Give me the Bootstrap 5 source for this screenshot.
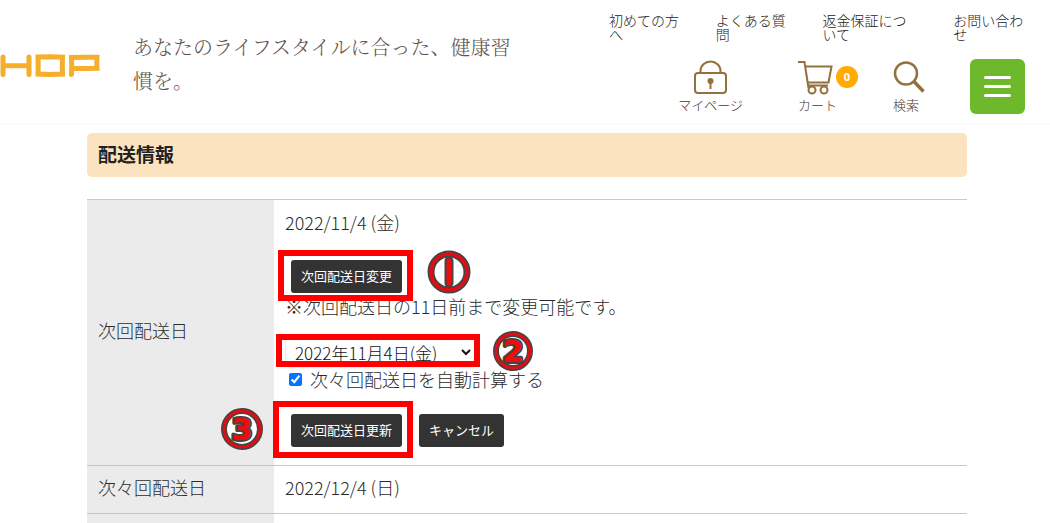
<!DOCTYPE html>
<html lang="ja">
<head>
<meta charset="utf-8">
<meta name="viewport" content="width=device-width, initial-scale=1">
<title>配送情報</title>
<link href="https://cdn.jsdelivr.net/npm/bootstrap@5.3.0/dist/css/bootstrap.min.css" rel="stylesheet">
<style>
  body { font-family: "Noto Sans CJK JP", sans-serif; font-weight: 300; color: #2b2b2b; overflow-x: hidden; }
  .site-header { height: 125px; border-bottom: 2px solid #fbfbfb; padding-right: 25px; }
  .logo { margin-top: 53px; width: 101px; }
  .tagline { font-family: "Noto Serif CJK JP", "Noto Sans CJK JP", serif; font-size: 20px; line-height: 34px; color: #62524a; margin: 30px 0 0 32px; padding-right: 80px; }
  .header-side { width: 416px; }
  .top-links { display: grid; grid-template-columns: 72fr 72fr 96fr 72fr; column-gap: 35px; padding-top: 13px; }
  .top-links a { font-size: 14px; line-height: 14px; color: #222; text-decoration: none; }
  .tools { padding-top: 18px; }
  .tool { font-size: 13px; line-height: 20px; color: #4a382d; text-decoration: none; }
  .tool svg { display: block; height: 36px; }
  .tool-cart { margin: 0 35px 0 55px; width: 60px; }
  .cart-count { top: 7px; right: 0; width: 22px; height: 22px; background: #ffab00; color: #fff; font: 700 11px/22px "Open Sans", sans-serif; }
  .menu-btn { width: 55px; height: 55px; margin-left: 45px; row-gap: 6px; background: #6eb92b; border-radius: 6px; }
  .menu-btn span { width: 27px; height: 3px; border-radius: 2px; background: #fff; }
  main { padding: 8px 83px 0 87px; }
  .section-title { font-size: 19px; line-height: 24px; font-weight: 700; color: #222; background: #fce3bf; border-radius: 5px; padding: 9px 11px 11px; margin-bottom: 22px; }
  .info-table { width: 100%; font-size: 18px; line-height: 27px; }
  .info-table tr { border-top: 1px solid #c8c8c8; }
  .info-table th { width: 187px; background: #ebebeb; font-weight: 300; }
  .info-table th, .info-table td { padding: 8px 11px 12px; }
  .info-table .schedule td { padding-bottom: 18px; }
  .current-date { line-height: 28px; }
  .button-row { padding-left: 6px; column-gap: 17px; }
  .dark-btn { font-size: 13px; line-height: 21px; color: #fff; background: #333; border-radius: 3px; padding: 5px 10px 7px; border: 0; font-weight: 400; height: 33px; display: block; }
  .date-select { font-size: 17px; line-height: 22px; width: 190px; height: 32px; padding: 0 8px 0 5px; border: 1px solid #eee; border-radius: 4px; background: #fff; color: #111; font-weight: 300; display: block; }
  .auto-label { line-height: 22px; }
  .auto-check { width: 13px; height: 13px; margin: 0 8px 0 4px; accent-color: #0075ff; }
  .marker { border: 6px solid #f00; pointer-events: none; }
  .marker-a { inset: -10px -11px -8px -13px; }
  .marker-b { inset: -2px -5px 1px -9px; }
  .marker-c { inset: -13px -11px -11px -18px; }
  .step { width: 44px; height: 44px; }
  .step-1 { left: 136px; top: -10px; }
  .step-2 { left: 206px; top: -7px; }
  .step-3 { left: -71px; top: -7px; }
  .step text { font: 700 31px "DejaVu Sans", sans-serif; }
</style>
</head>
<body>
<header class="site-header d-flex align-items-start">
  <a href="#" class="logo flex-shrink-0" aria-label="HOP">
    <svg class="d-block" width="101" height="25" viewBox="0 0 101 25" fill="none" stroke="#f6ae2d" stroke-width="5" stroke-linecap="round" stroke-linejoin="miter">
      <path d="M3 4v17.500M3 12.500l13 .3 13-.3M29 4v17.500"/>
      <path d="M38 4l12-.3 12.500.4-.2 8.500.2 8.500-12.500.4-12-.4.200-8.500z"/>
      <path d="M71.500 21.500l.2-8-.2-9 13-.2h12.500l-.2 5.500.2 5.500-13 .2-12-.3"/>
    </svg>
  </a>
  <p class="tagline flex-grow-1">あなたのライフスタイルに合った、健康習慣を。</p>
  <div class="header-side flex-shrink-0">
    <nav class="top-links">
      <a href="#">初めての方へ</a><a href="#">よくある質問</a><a href="#">返金保証について</a><a href="#">お問い合わせ</a>
    </nav>
    <div class="tools d-flex justify-content-end">
      <a href="#" class="tool text-center">
        <svg class="mx-auto" width="34" viewBox="0 0 34 36" fill="none" stroke="#94703f" stroke-width="2">
          <rect x="1" y="14" width="31" height="20" rx="3"/><path d="M6.500 14v-2a10 9.500 0 0 1 20 0v2M16.500 22v8"/><circle cx="16.500" cy="22" r="2" fill="#94703f"/>
        </svg>マイページ</a>
      <a href="#" class="tool tool-cart position-relative">
        <svg width="36" viewBox="0 0 36 36" fill="none" stroke="#94703f" stroke-width="2">
          <path d="M0 3h6.500L10.500 29M7.500 7.500H33.500L30.500 23.500H10M10.500 26.500H30"/><circle cx="14" cy="31" r="3.500"/><circle cx="26" cy="31" r="3.500"/>
        </svg>カート<span class="cart-count position-absolute rounded-circle text-center">0</span></a>
      <a href="#" class="tool">
        <svg width="32" viewBox="0 0 32 36" fill="none" stroke="#94703f">
          <circle cx="13" cy="14.500" r="11" stroke-width="2.500"/><path d="M20.500 22l10 10.500" stroke-width="3.500"/>
        </svg>検索</a>
      <button type="button" class="menu-btn border-0 p-0 d-flex flex-column align-items-center justify-content-center" aria-label="メニュー"><span></span><span></span><span></span></button>
    </div>
  </div>
</header>
<main>
  <h1 class="section-title">配送情報</h1>
  <table class="info-table">
    <tbody>
      <tr class="schedule">
        <th scope="row">次回配送日</th>
        <td>
          <div class="current-date">2022/11/4 (金)</div>
          <div class="button-row d-flex pt-4">
            <div class="position-relative">
              <button type="button" class="dark-btn">次回配送日変更</button>
              <span class="marker marker-a position-absolute"></span>
              <svg class="step step-1 position-absolute" viewBox="0 0 44 44" role="img" aria-label="1">
                <circle cx="22" cy="22" r="18" fill="#fff" stroke="#454545" stroke-width="7"/><circle cx="22" cy="22" r="18" fill="none" stroke="#e00d12" stroke-width="3.500"/>
                <path d="M22 11v22" stroke="#454545" stroke-width="9" stroke-linecap="round"/><path d="M22 11v22" stroke="#f20b0b" stroke-width="5" stroke-linecap="round"/>
              </svg>
            </div>
          </div>
          <div>※次回配送日の11日前まで変更可能です。</div>
          <div class="d-flex pt-3">
            <div class="position-relative">
              <select class="date-select" aria-label="次回配送日"><option>2022年11月4日(金)</option></select>
              <span class="marker marker-b position-absolute"></span>
              <svg class="step step-2 position-absolute" viewBox="0 0 44 44">
                <circle cx="22" cy="22" r="17" fill="#fff" stroke="#454545" stroke-width="6"/><circle cx="22" cy="22" r="17" fill="none" stroke="#e00d12" stroke-width="3"/>
                <text x="22" y="33" text-anchor="middle" fill="#f20b0b" stroke="#454545" stroke-width="4" paint-order="stroke" stroke-linejoin="round">2</text>
              </svg>
            </div>
          </div>
          <label class="auto-label d-flex align-items-center"><input type="checkbox" class="auto-check" checked>次々回配送日を自動計算する</label>
          <div class="button-row d-flex pt-4">
            <div class="position-relative">
              <button type="button" class="dark-btn">次回配送日更新</button>
              <span class="marker marker-c position-absolute"></span>
              <svg class="step step-3 position-absolute" viewBox="0 0 44 44">
                <circle cx="22" cy="22" r="18" fill="#fff" stroke="#454545" stroke-width="6"/><circle cx="22" cy="22" r="18" fill="none" stroke="#e00d12" stroke-width="3"/>
                <text x="22" y="33" text-anchor="middle" fill="#f20b0b" stroke="#454545" stroke-width="4" paint-order="stroke" stroke-linejoin="round">3</text>
              </svg>
            </div>
            <button type="button" class="dark-btn">キャンセル</button>
          </div>
        </td>
      </tr>
      <tr><th scope="row">次々回配送日</th><td>2022/12/4 (日)</td></tr>
      <tr><th></th><td></td></tr>
    </tbody>
  </table>
</main>
<script src="https://cdn.jsdelivr.net/npm/bootstrap@5.3.0/dist/js/bootstrap.bundle.min.js"></script>
</body>
</html>
